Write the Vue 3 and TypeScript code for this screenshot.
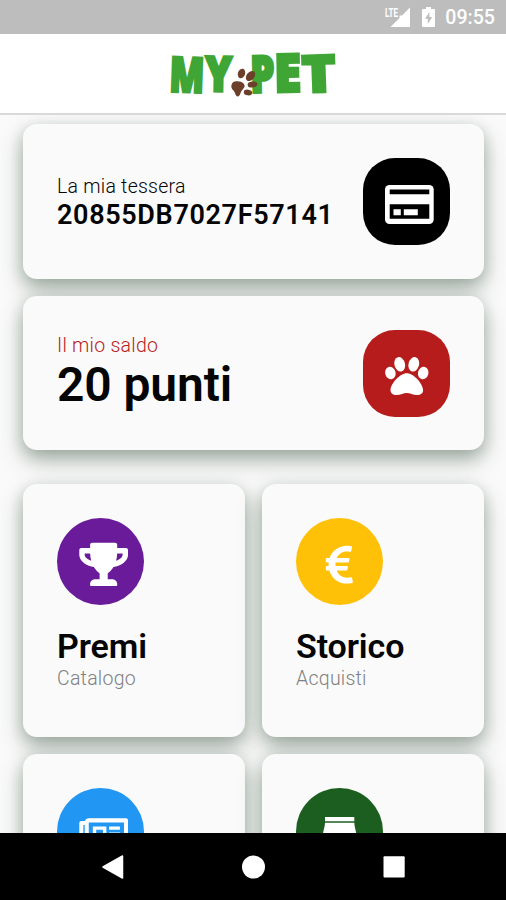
<script setup lang="ts">
interface Tile {
  id: string
  title?: string
  subtitle?: string
  icon: 'trophy' | 'euro' | 'news' | 'jar'
}

const cardNumber = '20855DB7027F57141'
const points = 20

const tiles: Tile[] = [
  { id: 'purple', title: 'Premi', subtitle: 'Catalogo', icon: 'trophy' },
  { id: 'amber', title: 'Storico', subtitle: 'Acquisti', icon: 'euro' },
  { id: 'blue', icon: 'news' },
  { id: 'green', icon: 'jar' },
]

const logoLetters = [
  { ch: 'M', transform: 'translate(-1 49.500) rotate(2) scale(0.72 0.97)' },
  { ch: 'Y', transform: 'translate(35 49) rotate(1) scale(0.8 0.97)' },
  { ch: 'P', transform: 'translate(80.5 50.5) rotate(-1) scale(0.77 1.02)' },
  { ch: 'E', transform: 'translate(104.5 50) rotate(-1) scale(0.98 1.05)' },
  { ch: 'T', transform: 'translate(132.500 50.500) rotate(-2) scale(1.14 1.02)' },
]
</script>

<template>
  <div class="screen">
    <div class="status">
      <svg class="signal" width="27" height="22" viewBox="0 0 27 22">
        <path d="M26 1.5V21H6.500L15.500 12V9.500H18Z" fill="#fff" />
        <text x="1" y="10.5" class="lte" textLength="13" lengthAdjust="spacingAndGlyphs">LTE</text>
      </svg>
      <svg class="battery" width="13" height="20" viewBox="0 0 13 20">
        <path d="M4 0h5v2h3q1 0 1 1v16q0 1-1 1H1q-1 0-1-1V3q0-1 1-1h3z" fill="#fff" />
        <path d="M7.4 5L3 11.8h2.8V17l4.3-7H7.4z" fill="#bdbdbd" />
      </svg>
      <span class="time">09:55</span>
    </div>

    <header class="header">
      <svg class="logo" width="180" height="76" viewBox="0 0 180 76">
        <g class="letters">
          <text v-for="l in logoLetters" :key="l.ch" :transform="l.transform">{{ l.ch }}</text>
        </g>
        <g class="paw" transform="translate(0 9)">
          <path d="M61.500 34c1-4 4-4 7.500-3.500 3 0 6.500 2.500 5.500 5.500-1 2-3 3-4 6-1 4.500-4.500 4.500-5.500 0-1-3-4.500-4-3.500-8z" />
          <ellipse cx="71.500" cy="22.500" rx="3.600" ry="4.900" transform="rotate(18 71.500 22.500)" />
          <ellipse cx="80.500" cy="25" rx="3.900" ry="5.700" transform="rotate(38 80.500 25)" />
          <ellipse cx="82.500" cy="33.500" rx="4.900" ry="3" transform="rotate(-8 82.500 33.500)" />
          <ellipse cx="78" cy="41.500" rx="4.200" ry="2.900" transform="rotate(8 78 41.500)" />
        </g>
      </svg>
    </header>

    <main class="content">
      <section class="card wide">
        <div class="info code">
          <span class="label">La mia tessera</span>
          <strong class="number">{{ cardNumber }}</strong>
        </div>
        <svg class="badge squircle black" viewBox="0 0 87 87">
          <rect x="22" y="27" width="48.7" height="39" rx="4.5" fill="#fff" />
          <path d="M26.7 31.5h39.6v4.7H26.7zM26.7 46.3h39.6v14.4H26.7z" fill="#000" />
          <path d="M30.5 51.3h7.3v6h-7.3zM40.8 51.3h14v6h-14z" fill="#fff" />
        </svg>
      </section>

      <section class="card wide">
        <div class="info">
          <span class="label red">Il mio saldo</span>
          <strong class="points">{{ points }} punti</strong>
        </div>
        <svg class="badge squircle crimson" viewBox="0 0 87 87">
          <g fill="#fff">
            <ellipse cx="27.4" cy="43" rx="5.2" ry="6.3" transform="rotate(-16 27.4 43)" />
            <ellipse cx="36.7" cy="34.3" rx="5.3" ry="7.3" transform="rotate(-14 36.7 34.3)" />
            <ellipse cx="50.8" cy="34.3" rx="5.3" ry="7.3" transform="rotate(14 50.8 34.3)" />
            <ellipse cx="60.2" cy="43" rx="5.2" ry="6.3" transform="rotate(16 60.2 43)" />
            <path
              transform="translate(22.1 24.3) scale(.0848)"
              d="M256 224c-79.41 0-192 122.76-192 200.25 0 34.9 26.81 55.75 71.74 55.75 48.84 0 81.09-25.08 120.26-25.08 39.51 0 71.85 25.08 120.26 25.08 44.93 0 71.74-20.85 71.74-55.75C448 346.76 335.41 224 256 224z"
            />
          </g>
        </svg>
      </section>

      <div class="grid">
        <section v-for="t in tiles" :key="t.id" class="card tile">
          <svg class="badge circle" :class="t.id" viewBox="0 0 87 87">
            <path
              v-if="t.icon === 'trophy'"
              fill="#fff"
              transform="translate(22.3 24.7) scale(.0846)"
              d="M552 64H448V24c0-13.3-10.7-24-24-24H152c-13.3 0-24 10.7-24 24v40H24C10.7 64 0 74.7 0 88v56c0 35.7 22.5 72.4 61.9 100.7 31.5 22.7 69.8 37.1 110 41.7C203.3 338.5 240 360 240 360v72h-48c-35.3 0-64 20.7-64 56v12c0 6.6 5.4 12 12 12h296c6.6 0 12-5.4 12-12v-12c0-35.3-28.7-56-64-56h-48v-72s36.7-21.5 68.1-73.6c40.3-4.6 78.6-19 110-41.7 39.3-28.3 61.9-65 61.9-100.7V88c0-13.3-10.7-24-24-24zM99.3 192.8C74.9 175.2 64 155.6 64 144v-16h64.2c1 32.6 5.8 61.2 12.8 86.2-15.1-5.2-29.2-12.4-41.7-21.4zM512 144c0 16.1-17.7 36.1-35.3 48.8-12.5 9-26.7 16.2-41.8 21.4 7-25 11.8-53.6 12.8-86.2H512v16z"
            />
            <path
              v-else-if="t.icon === 'euro'"
              fill="#fff"
              transform="translate(29.8 25) scale(.0846)"
              d="M310.706 413.765c-1.314-6.63-7.835-10.872-14.424-9.369-10.692 2.439-27.422 5.413-45.426 5.413-56.763 0-101.929-34.79-121.461-85.449h113.689a12 12 0 0 0 11.708-9.369l6.373-28.36c1.686-7.502-4.019-14.631-11.708-14.631H115.22c-1.21-14.328-1.414-28.287.137-42.245H261.95a12 12 0 0 0 11.723-9.434l6.512-29.755c1.638-7.484-4.061-14.566-11.723-14.566H130.184c20.633-44.991 62.69-75.03 117.619-75.03 14.486 0 28.564 2.25 37.851 4.145 6.216 1.268 12.347-2.498 14.002-8.623l11.991-44.368c1.822-6.741-2.465-13.616-9.326-14.917C290.217 34.912 270.71 32 249.635 32 152.451 32 74.03 92.252 45.075 176H12c-6.627 0-12 5.373-12 12v29.755c0 6.627 5.373 12 12 12h21.569c-1.009 13.607-1.181 29.287-.181 42.245H12c-6.627 0-12 5.373-12 12v28.36c0 6.627 5.373 12 12 12h30.114C67.139 414.692 145.264 480 249.635 480c26.301 0 48.562-4.544 61.101-7.788 6.167-1.595 10.027-7.708 8.788-13.957l-8.818-44.49z"
            />
            <path
              v-else-if="t.icon === 'news'"
              fill="#fff"
              fill-rule="evenodd"
              transform="translate(22.3 24.9) scale(.0846)"
              d="M552 64H112c-20.858 0-38.643 13.377-45.248 32H24c-13.255 0-24 10.745-24 24v272c0 30.928 25.072 56 56 56h496c13.255 0 24-10.745 24-24V88c0-13.255-10.745-24-24-24zM48 392V144h16v248c0 4.411-3.589 8-8 8s-8-3.589-8-8zm480 8H111.422c.374-2.614.578-5.283.578-8V112h416v288zM160 160h160v120H160zM200 200v40h80v-40zM352 160h128v40H352zM352 232h128v40H352zM160 312h320v40H160z"
            />
            <path
              v-else
              fill="#fff"
              d="M29 29h29.3v4.2H29zM29 34.8h29.3c.2 5 1.9 8 1.9 12V62a4 4 0 0 1-4 4H31a4 4 0 0 1-4-4V46.800c0-4 1.800-7 2-12z"
            />
          </svg>
          <strong v-if="t.title" class="title">{{ t.title }}</strong>
          <span v-if="t.subtitle" class="subtitle">{{ t.subtitle }}</span>
        </section>
      </div>
    </main>

    <nav class="navbar">
      <svg width="24" height="26" viewBox="0 0 24 26"><path d="M22.500 2v22L3 13z" fill="#fff" stroke="#fff" stroke-width="1.500" stroke-linejoin="round" /></svg>
      <svg width="24" height="24" viewBox="0 0 24 24"><circle cx="12.500" cy="12" r="11.500" fill="#fff" /></svg>
      <svg width="24" height="24" viewBox="0 0 24 24"><rect x="1.500" y="1.300" width="21.200" height="21.200" rx="1" fill="#fff" /></svg>
    </nav>
  </div>
</template>

<style>
body {
  margin: 0;
  overflow: hidden;
}
</style>

<style scoped>
.screen {
  width: 506px;
  height: 900px;
  display: flex;
  flex-direction: column;
  overflow: hidden;
  background: #fafafa;
  font-family: Roboto, 'Liberation Sans', sans-serif;
  color: #050505;
}
.status {
  flex: none;
  height: 34px;
  box-sizing: border-box;
  padding-right: 11px;
  display: flex;
  align-items: center;
  justify-content: flex-end;
  background: #bdbdbd;
  color: #fff;
}
.signal {
  margin-right: 11px;
}
.battery {
  margin-right: 10px;
}
.lte {
  font: 700 12px Roboto, sans-serif;
  fill: #fff;
}
.time {
  font-size: 19.6px;
  font-weight: 500;
  line-height: 34px;
  padding-top: 2px;
}
.header {
  flex: none;
  height: 81px;
  box-sizing: border-box;
  padding: 8px 0 0 170px;
  background: #fff;
  border-bottom: 2px solid #d9d9d9;
}
.logo {
  display: block;
  overflow: visible;
  margin-bottom: -5px;
}
.letters {
  font: 800 50px 'Open Sans', sans-serif;
  fill: #3fa535;
  stroke: #3fa535;
  stroke-width: 2.8px;
}
.paw {
  fill: #6b3f2a;
}
.content {
  flex: 1;
  min-height: 0;
  overflow: hidden;
  padding: 9.3px 22px 0 23px;
  display: flex;
  flex-direction: column;
}
.card {
  box-sizing: border-box;
  background: #fafafa;
  border-radius: 14px;
  box-shadow: 0 10px 22px rgba(30, 60, 35, 0.38), 0 3px 14px rgba(30, 60, 35, 0.14);
}
.wide {
  flex: none;
  height: 154.7px;
  margin-bottom: 16.7px;
  padding: 0 34px;
  display: flex;
  align-items: center;
  justify-content: space-between;
}
.info {
  display: flex;
  flex-direction: column;
}
.code {
  padding-top: 3px;
}
.label,
.subtitle {
  font-size: 19.5px;
  line-height: 23px;
  font-weight: 300;
  letter-spacing: 0.25px;
}
.red {
  color: #b71c1c;
}
.number {
  font-size: 27px;
  line-height: 34px;
  font-weight: 600;
  letter-spacing: 0.65px;
}
.points {
  font-size: 48px;
  line-height: 56px;
  font-weight: 600;
  letter-spacing: -0.1px;
}
.badge {
  flex: none;
  display: block;
  width: 87px;
  height: 87px;
}
.squircle {
  border-radius: 32px;
}
.circle {
  border-radius: 50%;
}
.black {
  background: #000;
}
.crimson {
  background: #b71c1c;
}
.purple {
  background: #6a1b9a;
}
.amber {
  background: #ffc107;
}
.blue {
  background: #2196f3;
}
.green {
  background: #1b5e20;
}
.grid {
  flex: none;
  margin-top: 17.2px;
  display: grid;
  grid-template-columns: 222px 222px;
  gap: 17px;
}
.tile {
  height: 253px;
  padding: 33.4px 34px;
  display: flex;
  flex-direction: column;
}
.title {
  margin-top: 21.5px;
  font-size: 34px;
  line-height: 40px;
  font-weight: 600;
  letter-spacing: -0.1px;
}
.subtitle {
  margin-top: 1px;
  color: #808080;
}
.navbar {
  flex: none;
  height: 67px;
  box-sizing: border-box;
  padding: 0 100px;
  display: flex;
  align-items: center;
  justify-content: space-between;
  background: #000;
}
</style>
